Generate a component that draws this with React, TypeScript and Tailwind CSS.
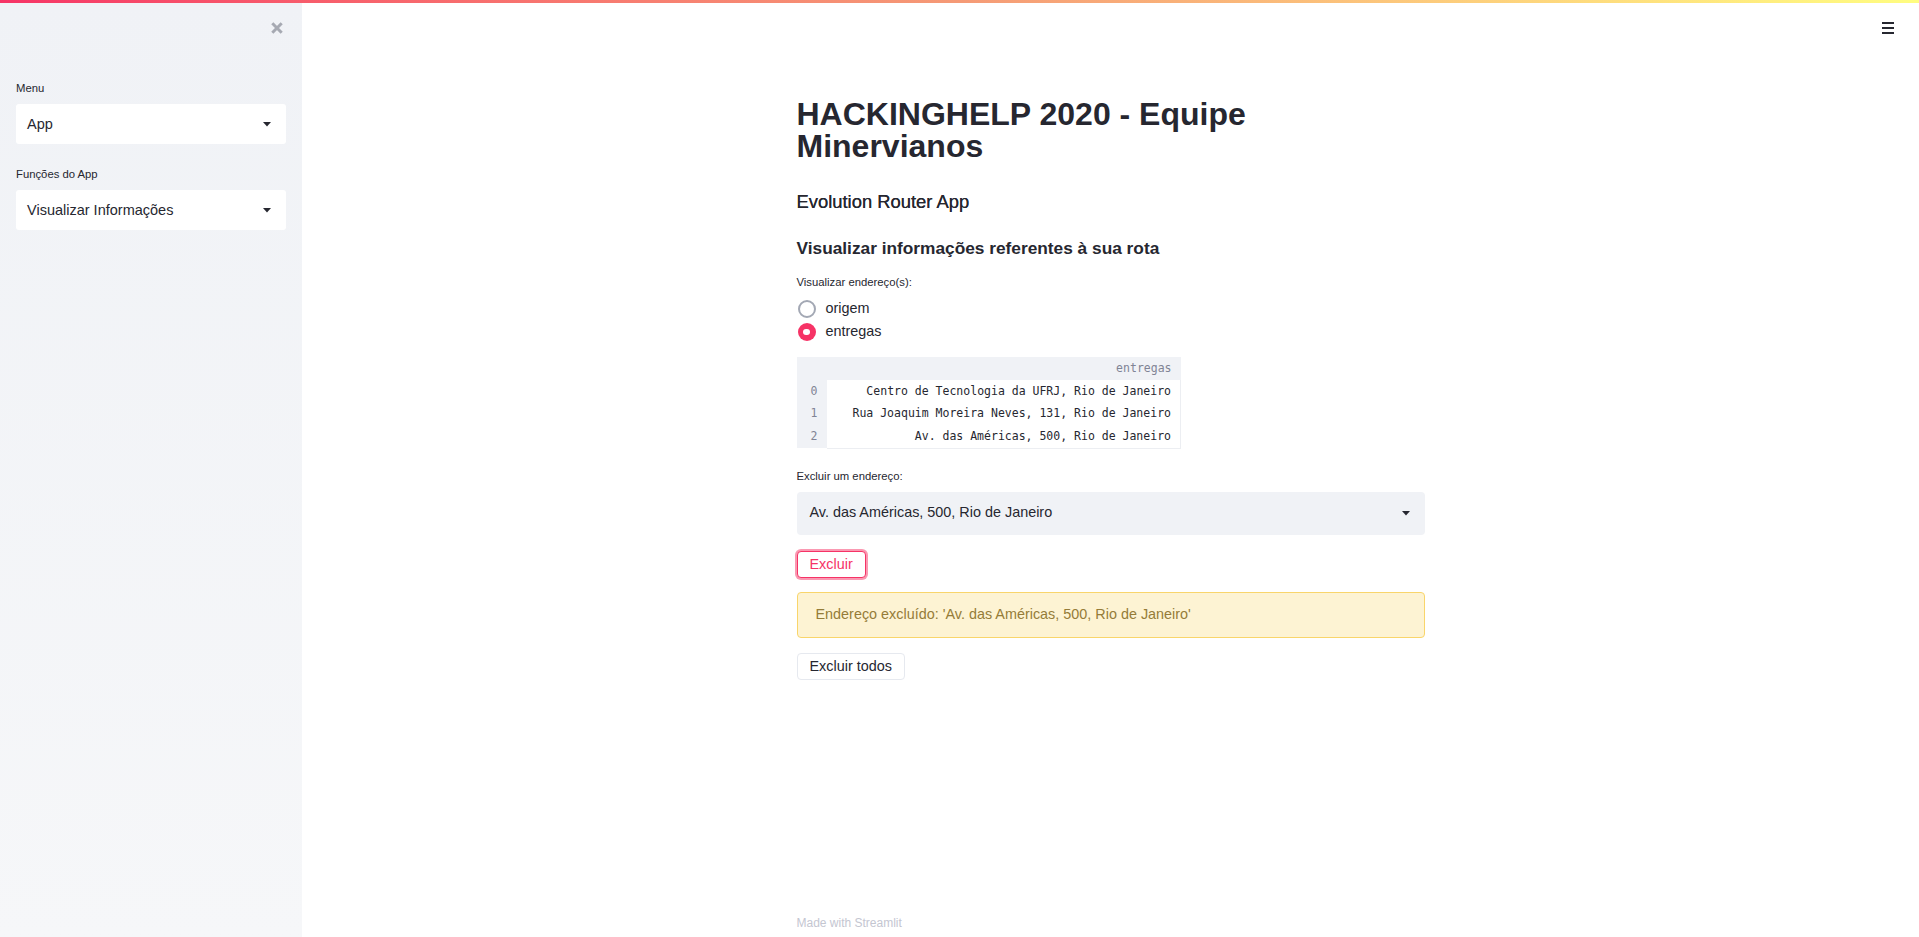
import { useState } from "react"

const enderecos = [
  "Centro de Tecnologia da UFRJ, Rio de Janeiro",
  "Rua Joaquim Moreira Neves, 131, Rio de Janeiro",
  "Av. das Américas, 500, Rio de Janeiro",
]

function Caret() {
  return (
    <svg width="8" height="5" viewBox="0 0 8 5" className="shrink-0">
      <polygon points="0,0 8,0 4,4.5" fill="#262730" />
    </svg>
  )
}

function SidebarSelect({ label, value, first }: { label: string; value: string; first?: boolean }) {
  return (
    <div className={first ? "mt-[24px]" : "mt-[22px]"}>
      <div className="text-[11.3px] leading-[16px] text-[#262730]">{label}</div>
      <div className="mt-[8px] h-[40px] bg-white rounded-[3px] flex items-center justify-between pl-[11px] pr-[15px]">
        <span className="text-[14.5px] text-[#262730] translate-y-[1px]">{value}</span>
        <Caret />
      </div>
    </div>
  )
}

function Radio({ label, checked, onClick }: { label: string; checked: boolean; onClick: () => void }) {
  return (
    <div className="h-[23px] flex items-center cursor-pointer" onClick={onClick}>
      {checked ? (
        <div className="w-[18px] h-[18px] ml-[1px] rounded-full bg-[#f63366] flex items-center justify-center">
          <div className="w-[7px] h-[6px] rounded-full bg-white" />
        </div>
      ) : (
        <div className="w-[18px] h-[18px] ml-[1px] rounded-full border-2 border-[#a3a8b4] bg-white" />
      )}
      <span className="ml-[10px] text-[14.4px] text-[#262730]">{label}</span>
    </div>
  )
}

export default function App() {
  const [visualizar, setVisualizar] = useState("entregas")

  return (
    <div className="relative flex h-[937px] w-full bg-white text-[#262730] font-['Liberation_Sans',Arial,sans-serif] overflow-hidden">
      {/* faixa colorida do topo */}
      <div className="absolute top-0 left-0 right-0 h-[3px] bg-linear-to-r from-[#f63366] via-[#f59a76] to-[#fffd80] z-10" />

      {/* sidebar */}
      <aside className="w-[302px] shrink-0 bg-linear-to-b from-[#f0f2f6] to-[#f6f7f9] px-4">
        <div className="h-[56px] flex items-center justify-end pr-[3px]">
          <svg width="12" height="12" viewBox="0 0 12 12">
            <path d="M1.3 1.3 L10.7 10.7 M10.7 1.3 L1.3 10.7" stroke="#a6a9b2" strokeWidth="3" />
          </svg>
        </div>
        <SidebarSelect label="Menu" value="App" first />
        <SidebarSelect label="Funções do App" value="Visualizar Informações" />
      </aside>

      {/* conteúdo principal */}
      <main className="relative flex-1 flex flex-col">
        <div className="absolute top-[22px] right-[25px] flex flex-col gap-[3px]">
          <div className="w-[12px] h-[2px] bg-[#262730]" />
          <div className="w-[12px] h-[2px] bg-[#262730]" />
          <div className="w-[12px] h-[2px] bg-[#262730]" />
        </div>

        <div className="w-[628px] mx-auto pt-[98px] flex-1">
          <h1 className="text-[32px] leading-[32px] font-bold">
            HACKINGHELP 2020 - Equipe
            <br />
            Minervianos
          </h1>

          <h3 className="mt-[28px] text-[18.4px] leading-[24px] [text-shadow:0_0_0.4px_#262730]">
            Evolution Router App
          </h3>

          <h3 className="mt-[22px] text-[17.3px] leading-[24px] font-bold">
            Visualizar informações referentes à sua rota
          </h3>

          <div className="mt-[14px] text-[11.3px] leading-[16px]">Visualizar endereço(s):</div>
          <div className="mt-[7px]">
            <Radio label="origem" checked={visualizar === "origem"} onClick={() => setVisualizar("origem")} />
            <Radio label="entregas" checked={visualizar === "entregas"} onClick={() => setVisualizar("entregas")} />
          </div>

          {/* tabela */}
          <table className="mt-[14px] border-collapse font-['DejaVu_Sans_Mono',monospace] text-[11.5px]">
            <thead>
              <tr className="h-[23px] bg-[#f0f2f6]">
                <th className="w-[30px] p-0" />
                <th className="w-[354px] pr-[9px] text-right font-normal text-[#808495]">entregas</th>
              </tr>
            </thead>
            <tbody>
              {enderecos.map((e, i) => (
                <tr key={i} className="h-[22.7px]">
                  <td className="bg-[#f0f2f6] text-right pr-[9px] text-[#808495]">{i}</td>
                  <td
                    className={
                      i === enderecos.length - 1
                        ? "bg-white text-right pr-[9px] border-r border-b border-[#eceef2] whitespace-nowrap"
                        : "bg-white text-right pr-[9px] border-r border-[#eceef2] whitespace-nowrap"
                    }
                  >
                    {e}
                  </td>
                </tr>
              ))}
            </tbody>
          </table>

          <div className="mt-[19px] text-[11.3px] leading-[16px]">Excluir um endereço:</div>
          <div className="mt-[8px] h-[43px] bg-[#f0f2f6] rounded-[4px] flex items-center justify-between pl-[13px] pr-[15px]">
            <span className="text-[14.4px]">Av. das Américas, 500, Rio de Janeiro</span>
            <Caret />
          </div>

          <button className="mt-[16px] h-[27px] px-3 pt-[2px] flex items-center border border-[#f63366] rounded-[4px] text-[14.4px] text-[#f63366] bg-white ring-2 ring-[#f63366]/50">
            Excluir
          </button>

          <div className="mt-[14px] h-[46px] flex items-center pl-[18px] border border-[#f9d56b] bg-[#fdf3d3] rounded-[4px] text-[14.4px] text-[#957c38]">
            Endereço excluído: 'Av. das Américas, 500, Rio de Janeiro'
          </div>

          <button className="mt-[15px] h-[27px] px-3 pt-[1px] flex items-center border border-[#e6e9ef] rounded-[4px] text-[14.4px] bg-white">
            Excluir todos
          </button>
        </div>

        <div className="w-[628px] mx-auto pb-[6px] text-[12px] leading-[16px] text-[#c4c6d1]">Made with Streamlit</div>
      </main>
    </div>
  )
}
